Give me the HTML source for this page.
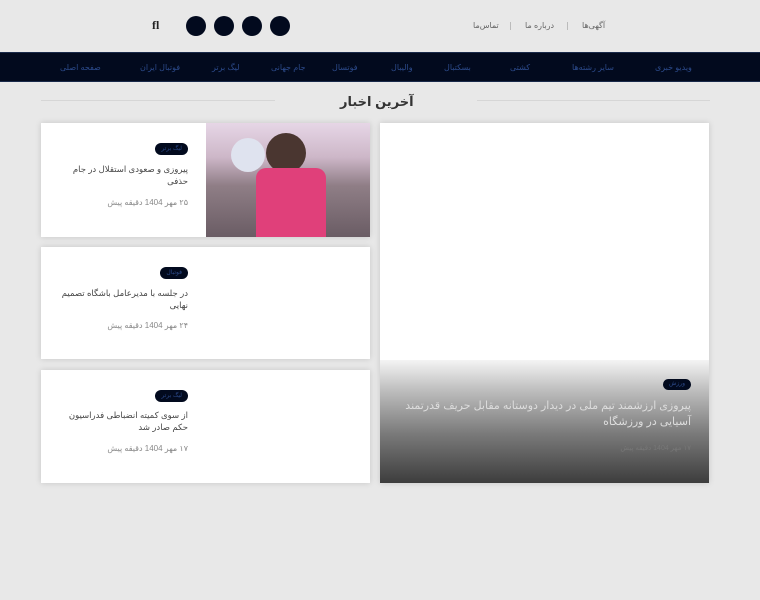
<!DOCTYPE html>
<html dir="ltr"><head><meta charset="utf-8"><style>
*{margin:0;padding:0;box-sizing:border-box}
body{width:760px;height:600px;background:#e8e8e8;font-family:"Liberation Sans","DejaVu Sans",sans-serif;position:relative;overflow:hidden}
.abs{position:absolute}
.circ{position:absolute;top:16px;width:20px;height:20px;border-radius:50%;background:#020a1e}
.toplink{position:absolute;top:21px;font-size:8px;color:#666}
.sep{position:absolute;top:22px;width:1px;height:8px;background:#bbb}
nav{position:absolute;left:0;top:52px;width:760px;height:30px;background:#020a1e;border-top:1px solid #1a2a4a;border-bottom:1px solid #1a2a4a}
nav span{position:absolute;top:10px;font-size:8px;color:#2c4a8a;white-space:nowrap}
.line{position:absolute;top:100px;height:1px;background:#d6d6d6}
.card{position:absolute;left:41px;width:329px;background:#fff;box-shadow:0 0 6px rgba(0,0,0,.15)}
.tag{position:absolute;right:182px;height:12px;border-radius:6px;background:#020a1e;color:#2c4a8a;font-size:6px;line-height:12px;padding:0 6px;white-space:nowrap}
.ttl{position:absolute;right:182px;width:130px;text-align:right;font-size:8.5px;line-height:12px;color:#444;direction:rtl}
.meta{position:absolute;right:182px;font-size:8px;color:#888;white-space:nowrap;direction:rtl}
</style></head><body>
<div class="abs" style="left:152px;top:18px;font:bold 12px 'Liberation Serif',serif;color:#222">fl</div>
<div class="circ" style="left:186px"></div><div class="circ" style="left:214px"></div><div class="circ" style="left:242px"></div><div class="circ" style="left:270px"></div>
<div class="toplink" style="left:473px">تماس‌ما</div><div class="sep" style="left:510px"></div>
<div class="toplink" style="left:525px">درباره ما</div><div class="sep" style="left:567px"></div>
<div class="toplink" style="left:582px">آگهی‌ها</div>
<nav>
<span style="left:60px">صفحه اصلی</span><span style="left:140px">فوتبال ایران</span><span style="left:212px">لیگ برتر</span><span style="left:271px">جام جهانی</span><span style="left:332px">فوتسال</span><span style="left:391px">والیبال</span><span style="left:444px">بسکتبال</span><span style="left:510px">کشتی</span><span style="left:572px">سایر رشته‌ها</span><span style="left:655px">ویدیو خبری</span>
</nav>
<div class="line" style="left:41px;width:234px"></div>
<div class="line" style="left:477px;width:233px"></div>
<div class="abs" style="left:340px;top:94px;font-size:13px;color:#333;font-weight:bold">آخرین اخبار</div>

<div class="card" style="top:123px;height:114px">
<div class="abs" style="left:165px;top:0;width:164px;height:114px;background:linear-gradient(180deg,#e6d6e6 0%,#cdb7c8 30%,#8f7e86 55%,#6a5c64 100%)">
<div class="abs" style="left:60px;top:10px;width:40px;height:40px;border-radius:50%;background:#4a3630"></div>
<div class="abs" style="left:25px;top:15px;width:34px;height:34px;border-radius:50%;background:#dfe3ef"></div>
<div class="abs" style="left:50px;top:45px;width:70px;height:69px;background:#e0407a;border-radius:10px 10px 0 0"></div>
</div>
<div class="tag" style="top:20px">لیگ برتر</div>
<div class="ttl" style="top:40px">پیروزی و صعودی استقلال در جام حذفی</div>
<div class="meta" style="top:75px">۲۵ مهر 1404 دقیقه پیش</div>
</div>
<div class="card" style="top:247px;height:112px">
<div class="tag" style="top:20px">فوتبال</div>
<div class="ttl" style="top:40px">در جلسه با مدیرعامل باشگاه تصمیم نهایی</div>
<div class="meta" style="top:74px">۲۴ مهر 1404 دقیقه پیش</div>
</div>
<div class="card" style="top:370px;height:113px">
<div class="tag" style="top:20px">لیگ برتر</div>
<div class="ttl" style="top:39px">از سوی کمیته انضباطی فدراسیون حکم صادر شد</div>
<div class="meta" style="top:74px">۱۷ مهر 1404 دقیقه پیش</div>
</div>

<div class="abs" style="left:380px;top:123px;width:329px;height:360px;background:#fff;box-shadow:0 0 6px rgba(0,0,0,.15)">
<div class="abs" style="left:0;top:237px;width:329px;height:123px;background:linear-gradient(180deg,#f4f4f4 0%,#bdbdbd 25%,#7a7a7a 60%,#3d3d3d 100%)"></div>
<div class="abs" style="right:18px;top:256px;height:11px;border-radius:6px;background:#020a1e;color:#2c4a8a;font-size:6px;line-height:11px;padding:0 6px">ورزش</div>
<div class="abs" style="right:18px;top:275px;width:300px;text-align:right;direction:rtl;font-size:11px;line-height:16px;color:#ddd">پیروزی ارزشمند تیم ملی در دیدار دوستانه مقابل حریف قدرتمند آسیایی در ورزشگاه</div>
<div class="abs" style="right:18px;top:321px;font-size:7px;color:#777;direction:rtl">۱۷ مهر 1404 دقیقه پیش</div>
</div>
</body></html>
